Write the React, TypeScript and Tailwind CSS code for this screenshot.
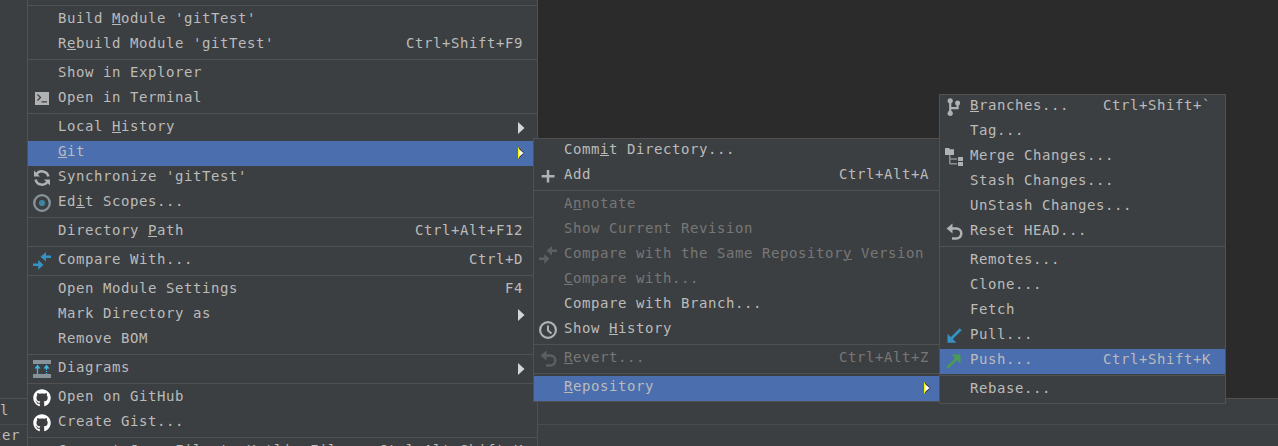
import React from "react";
import { FaGithub } from "react-icons/fa";

type IconName =
  | "terminal" | "sync" | "scope" | "compare" | "compareOff" | "diagram" | "github"
  | "plus" | "clock" | "undo" | "undoOff" | "branch" | "merge" | "pull" | "push";

type Item = {
  label?: string;
  mnemonic?: number;
  shortcut?: string;
  icon?: IconName;
  submenu?: boolean;
  disabled?: boolean;
  selected?: boolean;
  separator?: boolean;
};

const sep: Item = { separator: true };

const mainMenu: Item[] = [
  sep,
  { label: "Build Module 'gitTest'", mnemonic: 6 },
  { label: "Rebuild Module 'gitTest'", mnemonic: 1, shortcut: "Ctrl+Shift+F9" },
  sep,
  { label: "Show in Explorer" },
  { label: "Open in Terminal", icon: "terminal" },
  sep,
  { label: "Local History", mnemonic: 6, submenu: true },
  { label: "Git", mnemonic: 0, submenu: true, selected: true },
  { label: "Synchronize 'gitTest'", icon: "sync" },
  { label: "Edit Scopes...", mnemonic: 2, icon: "scope" },
  sep,
  { label: "Directory Path", mnemonic: 10, shortcut: "Ctrl+Alt+F12" },
  sep,
  { label: "Compare With...", icon: "compare", shortcut: "Ctrl+D" },
  sep,
  { label: "Open Module Settings", shortcut: "F4" },
  { label: "Mark Directory as", submenu: true },
  { label: "Remove BOM" },
  sep,
  { label: "Diagrams", icon: "diagram", submenu: true },
  sep,
  { label: "Open on GitHub", icon: "github" },
  { label: "Create Gist...", icon: "github" },
  sep,
  { label: "Convert Java File to Kotlin File", shortcut: "Ctrl+Alt+Shift+K" },
];

const gitMenu: Item[] = [
  { label: "Commit Directory...", mnemonic: 4 },
  { label: "Add", icon: "plus", shortcut: "Ctrl+Alt+A" },
  sep,
  { label: "Annotate", mnemonic: 1, disabled: true },
  { label: "Show Current Revision", disabled: true },
  { label: "Compare with the Same Repository Version", mnemonic: 31, icon: "compareOff", disabled: true },
  { label: "Compare with...", mnemonic: 0, disabled: true },
  { label: "Compare with Branch..." },
  { label: "Show History", mnemonic: 5, icon: "clock" },
  sep,
  { label: "Revert...", mnemonic: 0, icon: "undoOff", shortcut: "Ctrl+Alt+Z", disabled: true },
  sep,
  { label: "Repository", mnemonic: 0, submenu: true, selected: true },
];

const repositoryMenu: Item[] = [
  { label: "Branches...", mnemonic: 0, icon: "branch", shortcut: "Ctrl+Shift+`" },
  { label: "Tag..." },
  { label: "Merge Changes...", icon: "merge" },
  { label: "Stash Changes..." },
  { label: "UnStash Changes..." },
  { label: "Reset HEAD...", icon: "undo" },
  sep,
  { label: "Remotes..." },
  { label: "Clone..." },
  { label: "Fetch" },
  { label: "Pull...", icon: "pull" },
  { label: "Push...", icon: "push", shortcut: "Ctrl+Shift+K", selected: true },
  sep,
  { label: "Rebase..." },
];

function Undo({ color }: { color: string }) {
  return (
    <>
      <path d="M1.5 5.5 7.5 0.5v10Z" fill={color} />
      <path d="M6 5.5h5.3a5 5 0 0 1 0 10H7" fill="none" stroke={color} strokeWidth="2.5" />
    </>
  );
}

function Compare({ color }: { color: string }) {
  return (
    <path
      d="M7.5 4.8 13 0v3.4H18v2.6h-5V9.5ZM10.5 12.7 5.2 17.7V14H0v-2.6h5.2V8Z"
      fill={color}
    />
  );
}

const drawings: Record<Exclude<IconName, "github">, React.ReactNode> = {
  terminal: (
    <>
      <path d="M2 2h14v13H2Z" fill="#afb1b3" />
      <path d="m4.5 4.5 3 3-3 3M8.5 11.8H14" fill="none" stroke="#3c3f41" strokeWidth="1.3" />
    </>
  ),
  sync: (
    <>
      <path d="M3.2 6A6.5 6.5 0 0 1 15.4 7.5M14.8 12A6.5 6.5 0 0 1 2.6 10.5" fill="none" stroke="#afb1b3" strokeWidth="2.5" />
      <path d="M1 1.5v6h6ZM17 16.5v-6h-6Z" fill="#afb1b3" />
    </>
  ),
  scope: (
    <>
      <circle cx="9" cy="9" r="7.8" fill="none" stroke="#87939a" strokeWidth="2.3" />
      <circle cx="9" cy="9" r="3.1" fill="#3e86a0" />
    </>
  ),
  compare: <Compare color="#3592c4" />,
  compareOff: <Compare color="#5c5e60" />,
  diagram: (
    <>
      <path d="M0 0h18v4H0ZM0 14h18v4H0Z" fill="#87939a" />
      <path d="M4.5 14V6M13.5 6v4m0 1v1m0 1v1" stroke="#40b6e0" strokeWidth="1.3" />
      <path d="m4.5 4.5 3 4h-6ZM13.5 4.5l3 4h-6Z" fill="#40b6e0" />
    </>
  ),
  plus: <path d="M9 3v12.5M2.6 9.3h12.9" stroke="#afb1b3" strokeWidth="2.5" />,
  clock: (
    <>
      <circle cx="9" cy="9" r="7.9" fill="none" stroke="#afb1b3" strokeWidth="2.2" />
      <path d="M9 4.5v5l3.5 3" fill="none" stroke="#afb1b3" strokeWidth="2" />
    </>
  ),
  undo: <Undo color="#afb1b3" />,
  undoOff: <Undo color="#5c5e60" />,
  branch: (
    <>
      <circle cx="5.2" cy="2.8" r="2.6" fill="#afb1b3" />
      <circle cx="5.2" cy="15.3" r="2.6" fill="#afb1b3" />
      <circle cx="12.6" cy="5" r="2.5" fill="#afb1b3" />
      <path d="M5.2 3v12M5.2 10.2h7.4V5" fill="none" stroke="#afb1b3" strokeWidth="2.2" />
    </>
  ),
  merge: (
    <>
      <path d="M0 0h4l1 1.3h4V7H0ZM13 9h5v4h-5ZM13 14h5v4h-5Z" fill="#afb1b3" />
      <path d="M4.8 7v9M4.8 11H12M4.8 15.8H12" fill="none" stroke="#8d8f91" strokeWidth="1.5" />
    </>
  ),
  pull: (
    <>
      <path d="m15.7 2.3-10 10" stroke="#3592c4" strokeWidth="2.7" />
      <path d="M2.5 6.8v8.9h8.9Z" fill="#3592c4" />
    </>
  ),
  push: (
    <>
      <path d="m2.3 15.7 10-10" stroke="#499c54" strokeWidth="2.7" />
      <path d="M6.6 2.5h8.9v8.9Z" fill="#499c54" />
    </>
  ),
};

function MenuIcon({ name }: { name?: IconName }) {
  return (
    <span className="mt-[3px] ml-[5px] size-[18px] shrink-0">
      {name === "github" ? (
        <FaGithub className="size-[18px] text-white" />
      ) : name ? (
        <svg className="size-[18px]" viewBox="0 0 18 18">{drawings[name]}</svg>
      ) : null}
    </span>
  );
}

function Label({ text, mnemonic }: { text: string; mnemonic?: number }) {
  if (mnemonic === undefined) return <span>{text}</span>;
  return (
    <span>
      {text.slice(0, mnemonic)}
      <span className="underline decoration-1 underline-offset-1">{text[mnemonic]}</span>
      {text.slice(mnemonic + 1)}
    </span>
  );
}

function Arrow({ selected }: { selected?: boolean }) {
  return (
    <svg className="mt-[6px] -mr-[2px] h-3 w-2 shrink-0" viewBox="0 0 8 12">
      {selected ? (
        <>
          <path d="M1 0 7.5 6 1 12Z" fill="#222" />
          <path d="M1 1 6.5 6 1 11Z" fill="#fff" />
          <path d="M1.5 0.5v11" stroke="#f5f500" />
          <path d="M6 5h1v2H6Z" fill="#f03030" />
        </>
      ) : (
        <path d="M1 0 7.5 6 1 12Z" fill="#d4d5d6" />
      )}
    </svg>
  );
}

function Menu({ items, gutter }: { items: Item[]; gutter: string }) {
  return (
    <>
      {items.map((item, i) =>
        item.separator ? (
          <div key={i} className="flex h-1 flex-col pt-px">
            <div className="h-px bg-[#515151]" />
          </div>
        ) : (
          <div
            key={i}
            className={`flex h-[25px] items-start ${gutter} ${
              item.selected ? "bg-[#4b6eaf]" : ""
            } ${item.disabled ? "text-[#777777]" : "text-[#bbbbbb]"}`}
          >
            <MenuIcon name={item.icon} />
            <span className="ml-[7px] flex flex-1 justify-between">
              <Label text={item.label ?? ""} mnemonic={item.mnemonic} />
              {item.shortcut && <span>{item.shortcut}</span>}
            </span>
            {item.submenu && <Arrow selected={item.selected} />}
          </div>
        )
      )}
    </>
  );
}

export default function App() {
  return (
    <div className="relative flex h-[446px] w-[1278px] flex-col overflow-hidden bg-[#2b2b2b] font-['DejaVu_Sans_Mono',monospace] text-[14px] leading-[20px] tracking-[0.572px] whitespace-pre text-[#bbbbbb]">
      <div className="h-[398px] w-[28px] bg-[#3c3f41]" />
      <div className="h-[26px] border-t border-[#515151] bg-[#3c3f41] pt-px">l</div>
      <div className="h-[22px] border-t border-[#4b4b4b] bg-[#3c3f41]">
        <span className="-ml-[7px]">ter</span>
      </div>

      <div className="absolute top-0 left-[27px] h-[446px] w-[511px] overflow-hidden border-x border-[#515151] bg-[#3c3f41] pt-1">
        <Menu items={mainMenu} gutter="pr-[14px]" />
      </div>
      <div className="absolute top-[138px] left-[533px] w-[407px] border border-[#515151] bg-[#3c3f41]">
        <Menu items={gitMenu} gutter="pr-[10px]" />
      </div>
      <div className="absolute top-[94px] left-[939px] w-[287px] border border-[#515151] bg-[#3c3f41]">
        <Menu items={repositoryMenu} gutter="pr-[14px]" />
      </div>
    </div>
  );
}
